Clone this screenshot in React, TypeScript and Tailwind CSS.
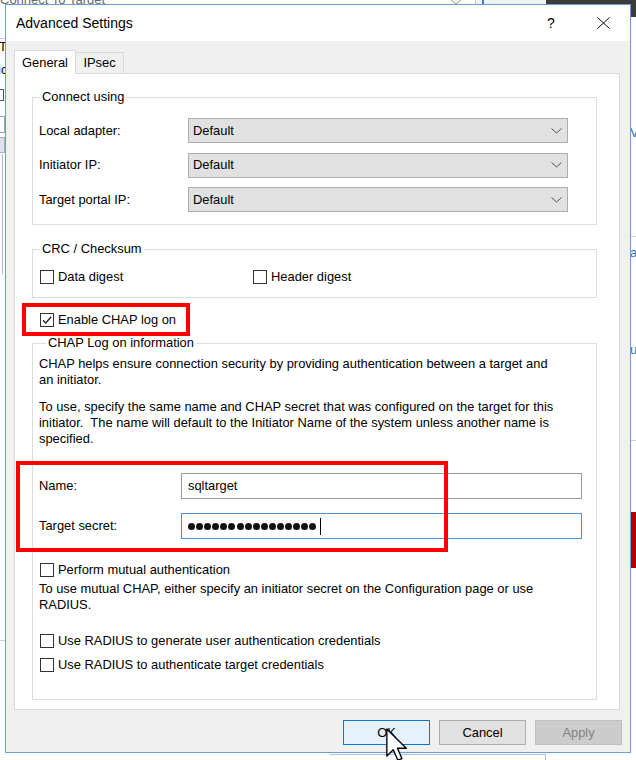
import type { ReactNode } from 'react';

// Windows-style checkbox
function CheckBox({ checked = false }: { checked?: boolean }) {
  return (
    <span className="flex h-[14px] w-[14px] shrink-0 items-center justify-center border border-[#333333] bg-white">
      {checked && (
        <svg width="12" height="12" viewBox="0 0 12 12">
          <path d="M2 6.2 L4.8 9 L10.2 2.8" fill="none" stroke="#222222" strokeWidth="1.3" />
        </svg>
      )}
    </span>
  );
}

function CheckRow({ label, checked, className = '' }: { label: string; checked?: boolean; className?: string }) {
  return (
    <div className={`flex h-[14px] items-center gap-[4px] ${className}`}>
      <CheckBox checked={checked} />
      <span className="leading-[14px] whitespace-nowrap">{label}</span>
    </div>
  );
}

function Group({ title, legendOffset, children, className = '' }: { title: string; legendOffset: string; children: ReactNode; className?: string }) {
  return (
    <fieldset className={`w-[565px] border border-[#dcdcdc] ${className}`}>
      <legend className={`${legendOffset} px-[2px] leading-[16px]`}>{title}</legend>
      {children}
    </fieldset>
  );
}

function ComboRow({ label }: { label: string }) {
  return (
    <div className="flex h-[25px] items-center">
      <span className="w-[149px] whitespace-nowrap">{label}</span>
      <div className="flex h-[25px] w-[380px] items-center justify-between border border-[#adadad] bg-[#e1e1e1] pl-[4px] pr-[5px]">
        <span>Default</span>
        <svg width="11" height="6" viewBox="0 0 11 6">
          <path d="M0.5 0.5 L5.5 5 L10.5 0.5" fill="none" stroke="#505050" strokeWidth="1" />
        </svg>
      </div>
    </div>
  );
}

function BehindWindow() {
  // the "Connect To Target" window peeking out behind the dialog
  return (
    <div className="absolute inset-0 bg-white">
      <span className="absolute left-0 top-[-10px] text-[13px] text-[#6a6a6a]">Connect To Target</span>
      <svg className="absolute left-[450px] top-0" width="12" height="5" viewBox="0 0 12 5">
        <path d="M1 0 L6 4 L11 0" fill="none" stroke="#9a9a9a" strokeWidth="1" />
      </svg>
      <div className="absolute left-[475px] top-0 h-[5px] w-[71px] border-l border-[#c8c8c8] bg-[#eef1f5]">
        <div className="ml-[6px] h-[4px] w-[2px] bg-[#3a7bd5]" />
      </div>
      <div className="absolute left-[546px] top-0 h-[17px] w-[90px] bg-[#3b3b3b]" />
      <div className="absolute left-0 top-[38px] h-[1px] w-[5px] bg-[#c8c8c8]" />
      <span className="absolute left-[-1px] top-[40px] text-[13px] leading-[14px]">T</span>
      <span className="absolute left-[-2px] top-[63px] text-[13px] leading-[14px]">ic</span>
      <div className="absolute left-[-4px] top-[89px] h-[12px] w-[8px] border border-[#555555]" />
      <div className="absolute left-[-4px] top-[116px] h-[17px] w-[9px] border border-[#a0a0a0] bg-white" />
      <div className="absolute left-[-4px] top-[137px] h-[16px] w-[9px] border border-[#adadad] bg-[#e1e1e1]" />
      <div className="absolute left-[2px] top-[154px] h-[120px] w-[1px] bg-[#b5b5b5]" />
      <div className="absolute left-0 top-[640px] h-[1px] w-[5px] bg-[#d0d0d0]" />
      <span className="absolute left-[630px] top-[126px] text-[13px] leading-[14px] text-[#2f6fc0]">V</span>
      <div className="absolute left-[631px] top-[236px] h-[1px] w-[5px] bg-[#d0d0d0]" />
      <span className="absolute left-[630px] top-[246px] text-[13px] leading-[14px] text-[#2f6fc0]">a</span>
      <span className="absolute left-[630px] top-[343px] text-[13px] leading-[14px] text-[#2f6fc0]">u</span>
      <div className="absolute left-[631px] top-[440px] h-[1px] w-[5px] bg-[#d0d0d0]" />
      <div className="absolute left-[631px] top-[512px] h-[56px] w-[5px] bg-[#b40000]" />
      <div className="absolute left-[330px] top-[754px] h-[6px] w-[216px] border-t border-r border-[#a9c4e4]" />
    </div>
  );
}

function Dialog() {
  return (
    <div className="absolute left-[5px] top-[4px] flex h-[749px] w-[626px] flex-col border border-[#6b9fd4] bg-[#f0f0f0] text-[12.9px]">
      {/* title bar */}
      <div className="flex h-[36px] items-center bg-white pl-[10px]">
        <span className="text-[14px]">Advanced Settings</span>
        <span className="ml-auto w-[10px] text-center text-[14px]">?</span>
        <svg className="ml-[41px] mr-[20px]" width="13" height="12" viewBox="0 0 13 12">
          <path d="M0.5 0.5 L12.5 11.5 M12.5 0.5 L0.5 11.5" stroke="#111111" strokeWidth="1" />
        </svg>
      </div>

      <div className="pl-[8px] pr-[10px] pt-[9px]">
        {/* tabs */}
        <div className="flex h-[23px] items-end">
          <div className="relative z-10 -mb-px flex h-[24px] w-[62px] items-center justify-center border-x border-t border-[#d9d9d9] bg-white">
            General
          </div>
          <div className="flex h-[21px] w-[48px] items-center justify-center border-r border-t border-[#d9d9d9]">
            IPsec
          </div>
        </div>

        {/* tab page */}
        <div className="h-[637px] border border-[#d9d9d9] bg-white pl-[17px] pt-[15px]">
          <Group title="Connect using" legendOffset="ml-[7px]" className="pb-[12px]">
            <div className="flex flex-col gap-[9.5px] pl-[6px] pt-[13px]">
              <ComboRow label="Local adapter:" />
              <ComboRow label="Initiator IP:" />
              <ComboRow label="Target portal IP:" />
            </div>
          </Group>

          <Group title="CRC / Checksum" legendOffset="ml-[7px]" className="mt-[16px] pb-[13px]">
            <div className="flex pl-[7px] pt-[13px]">
              <CheckRow label="Data digest" className="w-[213px]" />
              <CheckRow label="Header digest" />
            </div>
          </Group>

          <CheckRow label="Enable CHAP log on" checked className="mt-[15px] pl-[8px]" />

          <Group title="CHAP Log on information" legendOffset="ml-[13px]" className="mt-[8px] pb-[27px]">
            <div className="pl-[6px] pt-[5px] leading-[16px]">
              <p className="whitespace-pre">
                CHAP helps ensure connection security by providing authentication between a target and{'\n'}an initiator.
              </p>
              <p className="mt-[11px] whitespace-pre">
                To use, specify the same name and CHAP secret that was configured on the target for this{'\n'}initiator.  The name will default to the Initiator Name of the system unless another name is{'\n'}specified.
              </p>

              <div className="mt-[26px] flex h-[26px] items-center">
                <span className="w-[142px]">Name:</span>
                <div className="flex h-[26px] w-[401px] items-center border border-[#9a9a9a] bg-white pl-[6px]">
                  sqltarget
                </div>
              </div>
              <div className="mt-[14px] flex h-[26px] items-center">
                <span className="w-[142px]">Target secret:</span>
                <div className="flex h-[26px] w-[401px] items-center gap-[1.1px] border border-[#4b94d6] bg-white pl-[6px]">
                  {Array.from({ length: 16 }).map((_, i) => (
                    <span key={i} className="h-[7px] w-[7px] rounded-full bg-[#111111]" />
                  ))}
                  <span className="ml-[2px] h-[17px] w-[1px] bg-black" />
                </div>
              </div>

              <CheckRow label="Perform mutual authentication" className="ml-[1px] mt-[24px]" />
              <p className="mt-[4px] whitespace-pre">
                To use mutual CHAP, either specify an initiator secret on the Configuration page or use{'\n'}RADIUS.
              </p>

              <CheckRow label="Use RADIUS to generate user authentication credentials" className="ml-[1px] mt-[21px]" />
              <CheckRow label="Use RADIUS to authenticate target credentials" className="ml-[1px] mt-[10px]" />
            </div>
          </Group>
        </div>
      </div>

      {/* buttons */}
      <div className="mt-[10px] flex justify-end gap-[9px] pr-[8px]">
        <button className="h-[25px] w-[87px] border border-[#0078d7] bg-[#e5f1fb]">OK</button>
        <button className="h-[25px] w-[87px] border border-[#adadad] bg-[#e1e1e1]">Cancel</button>
        <button className="h-[25px] w-[87px] border border-[#bfbfbf] bg-[#cccccc] text-[#838383]">Apply</button>
      </div>
    </div>
  );
}

export default function App() {
  return (
    <div className="relative h-[760px] w-[636px] overflow-hidden bg-white font-['Liberation_Sans',Arial,sans-serif] text-black">
      <BehindWindow />
      <Dialog />

      {/* red highlight boxes drawn over the screenshot */}
      <div className="absolute left-[22px] top-[303px] h-[33px] w-[168px] border-[4px] border-[#ff0000]" />
      <div className="absolute left-[16px] top-[461px] h-[91px] w-[432px] border-[4px] border-[#ff0000]" />

      {/* mouse pointer over OK */}
      <svg className="absolute left-[386px] top-[728px]" width="22" height="34" viewBox="0 0 13 20">
        <path d="M0.5 0.5 L0.5 16.5 L4.3 12.8 L7 19 L9.4 18 L6.8 11.9 L12 11.9 Z" fill="#ffffff" stroke="#000000" strokeWidth="0.8" strokeLinejoin="round" />
      </svg>
    </div>
  );
}
